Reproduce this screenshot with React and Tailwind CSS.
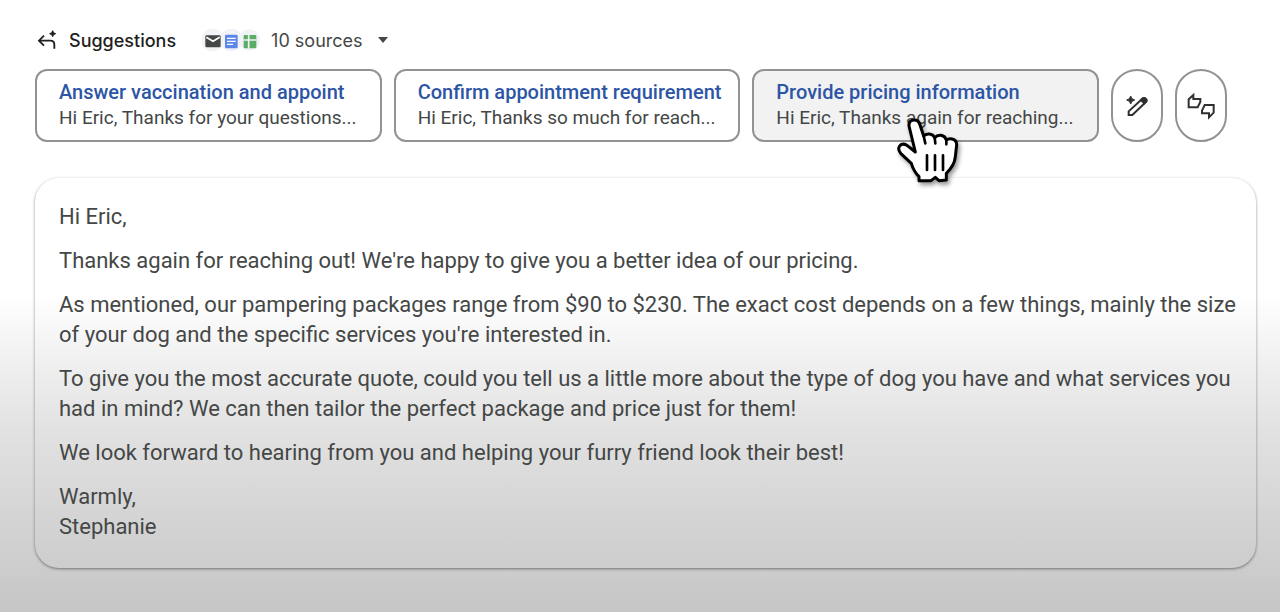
const suggestions = [
  { title: "Answer vaccination and appoint", preview: "Hi Eric, Thanks for your questions..." },
  { title: "Confirm appointment requirement", preview: "Hi Eric, Thanks so much for reach..." },
  { title: "Provide pricing information", preview: "Hi Eric, Thanks again for reaching...", active: true },
];

function ReplySparkIcon() {
  return (
    <svg viewBox="0 0 60 60" className="h-5 w-5" fill="none" stroke="#1f1f1f" strokeWidth="5.5" aria-hidden="true">
      <path d="M21 17 L6 32 L21 47" />
      <path d="M7 32 H40 Q52 32 52 44 V56" />
      <path d="M47 2 Q48 10 56 11 Q48 12 47 20 Q46 12 38 11 Q46 10 47 2 Z" fill="#1f1f1f" strokeWidth="3" />
    </svg>
  );
}

function SourceIcons() {
  return (
    <svg viewBox="0 0 174 72" className="h-6 w-[58px]" aria-hidden="true">
      <circle cx="32" cy="36" r="34" fill="#f1f3f6" />
      <circle cx="88" cy="36" r="34" fill="#f1f3f6" />
      <circle cx="142" cy="36" r="32" fill="#f1f3f6" />
      <rect x="10" y="22" width="46" height="36" rx="4" fill="#444746" />
      <path d="M13 28 L33 40 L53 28" fill="none" stroke="#fff" strokeWidth="5" />
      <rect x="69" y="20" width="38" height="41" rx="4" fill="#5b87ea" />
      <path d="M75 31 H101 M75 40 H101 M75 49 H93" stroke="#fff" strokeWidth="4" />
      <rect x="125" y="21" width="38" height="40" rx="3" fill="#5bac64" />
      <path d="M140 21 V61 M125 36 H163" stroke="#f1f3f6" strokeWidth="5" />
    </svg>
  );
}

function MagicPencilIcon() {
  return (
    <svg viewBox="0 0 72 72" className="h-6 w-6" fill="none" stroke="#303030" strokeWidth="6" aria-hidden="true">
      <path d="M11 63 V52 L52 14 Q57 10 62 15 Q67 20 62 25 L22 63 Z" />
      <path d="M48 18 L58 28 L63 23 Q67 18 62 14 Q57 10 52 14 Z" fill="#303030" />
      <path d="M17 6 Q19 16 29 18 Q19 20 17 30 Q15 20 5 18 Q15 16 17 6 Z" fill="#303030" strokeWidth="3" />
    </svg>
  );
}

function FeedbackIcon() {
  return (
    <svg viewBox="0 0 90 84" className="h-7 w-[30px]" fill="none" stroke="#303030" strokeWidth="6" aria-hidden="true">
      <path d="M8 22 L22 9 V21 H43 V29 L35 46 H8 Z" />
      <path d="M83 62 L69 76 V64 H48 V56 L56 39 H83 Z" />
    </svg>
  );
}

function HandPointer() {
  return (
    <svg
      viewBox="42 168 195 207"
      className="pointer-events-none absolute top-[47px] left-[143px] h-[69px] w-[65px] drop-shadow-[2px_3px_2px_rgba(0,0,0,0.4)]"
      strokeLinejoin="round"
      strokeLinecap="round"
      aria-hidden="true"
    >
      <path
        d="M84 198 Q83 180 100 180 Q112 180 116 192 L128 228 Q134 221 145 222 Q156 223 161 233 Q168 225 180 226 Q192 228 196 240 Q204 234 214 237 Q227 240 227 254 L223 290 Q221 316 196 340 L196 360 L174 362 L163 352 L150 362 L114 362 L114 350 Q98 334 91 310 L59 280 Q49 268 56 258 Q64 248 78 256 L103 276 Z"
        fill="#fff"
        stroke="#000"
        strokeWidth="9"
      />
      <path d="M128 228 L133 250 M161 233 L163 250 M196 240 V253" stroke="#000" strokeWidth="8" />
      <path d="M138 286 V330 M162 286 V330 M186 286 V330" stroke="#000" strokeWidth="8" />
    </svg>
  );
}

export default function App() {
  return (
    <main className="min-h-screen bg-linear-to-b from-white from-48% via-[#e2e2e2] via-70% to-[#c6c6c6] px-6 pt-7 pb-11 font-[Roboto,sans-serif] text-[#444746] sm:pr-6 sm:pl-[35px]">
      <header className="flex h-6 items-center font-[Inter,sans-serif]">
        <span className="ml-0.5 flex items-center gap-3">
          <ReplySparkIcon />
          <h1 className="text-[18px] font-medium text-[#1f1f1f]">Suggestions</h1>
        </span>
        <button type="button" className="ml-[26px] flex items-center gap-[11px] text-[18px]">
          <SourceIcons />
          <span>10 sources</span>
          <svg viewBox="0 0 10 6" className="ml-1 h-1.5 w-2.5" fill="#444746" aria-hidden="true">
            <path d="M0 0 H10 L5 6 Z" />
          </svg>
        </button>
      </header>

      <section aria-label="Suggested replies" className="mt-[17px] mr-[29px] flex gap-3">
        {suggestions.map((item) => (
          <div key={item.title} className="relative min-w-0 flex-1">
            <button
              type="button"
              className={`h-[73px] w-full rounded-xl border-2 border-[#929292] pr-2 pb-0.5 pl-[22px] text-left ${item.active ? "bg-[#f2f2f2]" : "bg-white"}`}
            >
              <span className="block truncate text-[20px] leading-[25px] font-medium text-[#2d55a5]">{item.title}</span>
              <span className="block truncate text-[19px] leading-[25px]">{item.preview}</span>
            </button>
            {item.active && <HandPointer />}
          </div>
        ))}
        <button type="button" aria-label="Refine" className="flex h-[73px] w-[52px] shrink-0 items-center justify-center rounded-full border-2 border-[#929292] bg-white">
          <MagicPencilIcon />
        </button>
        <button type="button" aria-label="Feedback" className="flex h-[73px] w-[52px] shrink-0 items-center justify-center rounded-full border-2 border-[#929292] bg-white">
          <FeedbackIcon />
        </button>
      </section>

      <article className="mt-9 flex flex-col gap-3.5 rounded-3xl pt-6 pr-3 pb-[26px] pl-6 text-[22px] leading-[30px] shadow-[0_1px_3px_rgba(0,0,0,0.45)]">
        <p>Hi Eric,</p>
        <p>Thanks again for reaching out! We're happy to give you a better idea of our pricing.</p>
        <p>
          As mentioned, our pampering packages range from $90 to $230. The exact cost depends on a few things, mainly the size
          of your dog and the specific services you're interested in.
        </p>
        <p>
          To give you the most accurate quote, could you tell us a little more about the type of dog you have and what services you
          had in mind? We can then tailor the perfect package and price just for them!
        </p>
        <p>We look forward to hearing from you and helping your furry friend look their best!</p>
        <p>
          Warmly,
          <br />
          Stephanie
        </p>
      </article>
    </main>
  );
}
